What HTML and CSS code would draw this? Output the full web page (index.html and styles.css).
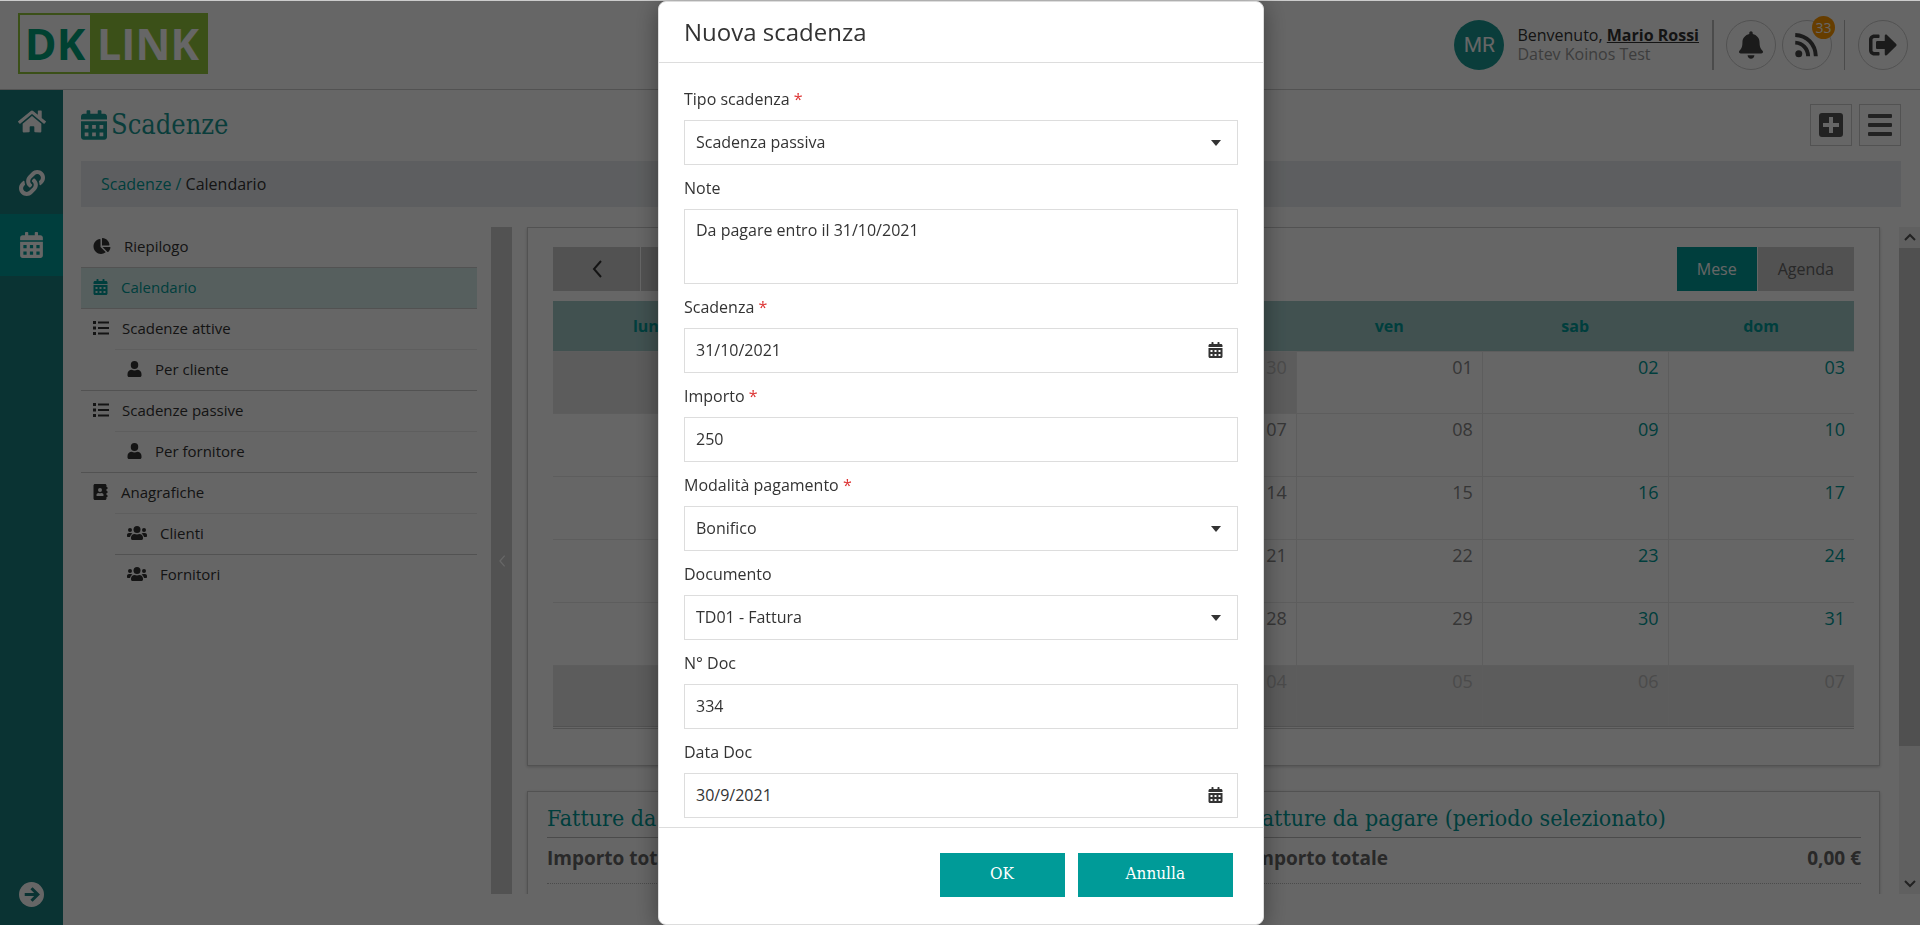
FILE: index.html
```html
<!DOCTYPE html>
<html lang="it">
<head>
  <meta charset="UTF-8">
  <meta name="viewport" content="width=device-width, initial-scale=1.0">
  <title>DK Link - Scadenze</title>
  <link rel="stylesheet" href="styles.css">
</head>
<body>
  <!-- Icone condivise -->
  <svg class="sprite" aria-hidden="true">
    <symbol id="i-calendar" viewBox="0 0 448 512"><path fill-rule="evenodd" d="M0 464c0 26.500 21.500 48 48 48h352c26.500 0 48-21.500 48-48V192H0v272zM64 256h64v64H64zm128 0h64v64h-64zm128 0h64v64h-64zM64 384h64v64H64zm128 0h64v64h-64zm128 0h64v64h-64zM400 64h-48V16c0-8.800-7.200-16-16-16h-32c-8.800 0-16 7.200-16 16v48H160V16c0-8.800-7.200-16-16-16h-32c-8.800 0-16 7.200-16 16v48H48C21.500 64 0 85.500 0 112v48h448v-48c0-26.500-21.500-48-48-48z"/></symbol>
    <symbol id="i-home" viewBox="0 0 576 512"><path d="M280.370 148.260L96 300.110V464a16 16 0 0 0 16 16l112.060-.29a16 16 0 0 0 15.920-16V368a16 16 0 0 1 16-16h64a16 16 0 0 1 16 16v95.640a16 16 0 0 0 16 16.050L464 480a16 16 0 0 0 16-16V300L295.670 148.260a12.190 12.190 0 0 0-15.300 0zM571.600 251.470L488 182.560V44.050a12 12 0 0 0-12-12h-56a12 12 0 0 0-12 12v72.610L318.470 43a48 48 0 0 0-61 0L4.340 251.470a12 12 0 0 0-1.600 16.900l25.500 31A12 12 0 0 0 45.150 301l235.220-193.740a12.190 12.190 0 0 1 15.300 0L530.900 301a12 12 0 0 0 16.900-1.600l25.500-31a12 12 0 0 0-1.700-16.930z"/></symbol>
    <symbol id="i-link" viewBox="0 0 512 512"><path d="M326.612 185.391c59.747 59.809 58.927 155.698.36 214.590-.11.120-.24.250-.36.370l-67.200 67.200c-59.270 59.270-155.699 59.262-214.960 0-59.270-59.260-59.270-155.700 0-214.960l37.106-37.106c9.840-9.840 26.786-3.300 27.294 10.606.648 17.722 3.826 35.527 9.690 52.721 1.986 5.822.567 12.262-3.783 16.612l-13.087 13.087c-28.026 28.026-28.905 73.660-1.155 101.960 28.024 28.579 74.086 28.749 102.325.510l67.200-67.190c28.191-28.191 28.073-73.757 0-101.830-3.701-3.694-7.429-6.564-10.341-8.569a16.037 16.037 0 0 1-6.947-12.606c-.396-10.567 3.348-21.456 11.698-29.806l21.054-21.055c5.521-5.521 14.182-6.199 20.584-1.731a152.482 152.482 0 0 1 20.522 17.197zM467.547 44.449c-59.261-59.262-155.690-59.270-214.960 0l-67.200 67.200c-.120.120-.250.250-.360.370-58.566 58.892-59.387 154.781.360 214.590a152.454 152.454 0 0 0 20.521 17.196c6.402 4.468 15.064 3.789 20.584-1.731l21.054-21.055c8.350-8.350 12.094-19.239 11.698-29.806a16.037 16.037 0 0 0-6.947-12.606c-2.912-2.005-6.640-4.875-10.341-8.569-28.073-28.073-28.191-73.639 0-101.830l67.200-67.190c28.239-28.239 74.300-28.069 102.325.510 27.750 28.300 26.872 73.934-1.155 101.960l-13.087 13.087c-4.350 4.350-5.769 10.790-3.783 16.612 5.864 17.194 9.042 34.999 9.690 52.721.509 13.906 17.454 20.446 27.294 10.606l37.106-37.106c59.271-59.259 59.271-155.699.001-214.959z"/></symbol>
    <symbol id="i-arrow" viewBox="0 0 24 24"><circle cx="12" cy="12" r="12"/><path class="cut" d="M5.500 12h12M12 6l6 6-6 6"/></symbol>
    <symbol id="i-pie" viewBox="0 0 544 512"><path d="M527.790 288H290.500l158.030 158.030c6.040 6.040 15.980 6.530 22.190.680 38.700-36.460 65.320-85.610 73.130-140.860 1.340-9.460-6.510-17.850-16.060-17.850zm-15.830-64.800C503.720 103.740 408.260 8.280 288.800.040 279.680-.59 272 7.100 272 16.240V240h223.770c9.140 0 16.820-7.680 16.190-16.800zM224 288V50.710c0-9.550-8.390-17.400-17.840-16.060C86.990 51.490-4.100 155.600.140 280.370 4.500 408.510 114.830 513.590 243.030 511.980c50.400-.63 96.970-16.870 135.260-44.030 7.900-5.600 8.420-17.230 1.570-24.080L224 288z"/></symbol>
    <symbol id="i-list" viewBox="0 0 512 512"><path d="M0 32h96v96H0zM0 208h96v96H0zM0 384h96v96H0zM160 48h352v64H160zM160 224h352v64H160zM160 400h352v64H160z"/></symbol>
    <symbol id="i-user" viewBox="0 0 448 512"><path d="M224 0a120 128 0 1 0 0 256a120 128 0 1 0 0-256zM134 282C60 282 0 335 0 416v48c0 26 21 48 48 48h352c27 0 48-22 48-48v-48c0-81-60-134-134-134c-56 26-124 26-180 0z"/></symbol>
    <symbol id="i-book" viewBox="0 0 448 512"><path fill-rule="evenodd" d="M48 0h320c26 0 48 22 48 48v48h20a12 12 0 0 1 12 12v40a12 12 0 0 1-12 12h-20v64h20a12 12 0 0 1 12 12v40a12 12 0 0 1-12 12h-20v64h20a12 12 0 0 1 12 12v40a12 12 0 0 1-12 12h-20v48c0 26-22 48-48 48H48c-26 0-48-22-48-48V48C0 22 22 0 48 0zm160 128a64 64 0 1 0 0 128a64 64 0 1 0 0-128zM96 365c0 10 10 19 22 19h180c12 0 22-9 22-19v-19c0-32-30-58-67-58c-29 13-61 13-90 0c-37 0-67 26-67 58z"/></symbol>
    <symbol id="i-users" viewBox="0 0 640 512"><circle cx="96" cy="160" r="64"/><circle cx="544" cy="160" r="64"/><circle cx="320" cy="144" r="112"/><path d="M64 256c-35 0-64 29-64 64v32c0 18 14 32 32 32h66c7-45 35-84 75-106-12-14-28-22-45-22zM576 256h-64c-17 0-33 8-45 22 40 22 68 61 75 106h66c18 0 32-14 32-32v-32c0-35-29-64-64-64zM243 288c-64 0-115 52-115 115v29c0 27 21 48 48 48h288c27 0 48-21 48-48v-29c0-63-51-115-115-115-52 21-102 21-154 0z"/></symbol>
    <symbol id="i-bell" viewBox="0 0 448 512"><path d="M224 512c35.320 0 63.970-28.650 63.970-64H160.030c0 35.350 28.650 64 63.970 64zm215.390-149.710c-19.320-20.760-55.470-51.990-55.470-154.290 0-77.700-54.480-139.900-127.940-155.160V32c0-17.670-14.320-32-31.980-32s-31.980 14.330-31.980 32v20.840C118.560 68.100 64.080 130.300 64.080 208c0 102.300-36.150 133.530-55.470 154.290-6 6.450-8.660 14.160-8.610 21.710.110 16.400 12.980 32 32.100 32h383.800c19.120 0 32-15.600 32.100-32 .050-7.550-2.610-15.270-8.610-21.710z"/></symbol>
    <symbol id="i-rss" viewBox="0 0 448 512"><circle cx="64" cy="416" r="64"/><path class="wave" d="M0 212c130 6 230 106 236 250M0 72c210 8 370 168 376 390"/></symbol>
    <symbol id="i-exit" viewBox="0 0 512 512"><path d="M497 273L329 441c-15 15-41 4.500-41-17v-96H152c-13.300 0-24-10.700-24-24v-96c0-13.300 10.700-24 24-24h136V88c0-21.400 25.900-32 41-17l168 168c9.300 9.400 9.300 24.600 0 34zM192 436v-40c0-6.600-5.400-12-12-12H96c-17.700 0-32-14.300-32-32V160c0-17.700 14.300-32 32-32h84c6.600 0 12-5.400 12-12V76c0-6.600-5.400-12-12-12H96c-53 0-96 43-96 96v192c0 53 43 96 96 96h84c6.600 0 12-5.400 12-12z"/></symbol>
    <symbol id="i-plus" viewBox="0 0 24 24"><path fill-rule="evenodd" d="M3 0h18a3 3 0 0 1 3 3v18a3 3 0 0 1-3 3H3a3 3 0 0 1-3-3V3a3 3 0 0 1 3-3zM10 4v6H4v4h6v6h4v-6h6v-4h-6V4z"/></symbol>
    <symbol id="i-bars" viewBox="0 0 24 24"><path d="M1 1h22a1 1 0 0 1 1 1v2a1 1 0 0 1-1 1H1a1 1 0 0 1-1-1V2a1 1 0 0 1 1-1zM1 10h22a1 1 0 0 1 1 1v2a1 1 0 0 1-1 1H1a1 1 0 0 1-1-1v-2a1 1 0 0 1 1-1zM1 19h22a1 1 0 0 1 1 1v2a1 1 0 0 1-1 1H1a1 1 0 0 1-1-1v-2a1 1 0 0 1 1-1z"/></symbol>
    <symbol id="i-left" viewBox="0 0 10 18"><path class="stroke" d="M9 1L2 9l7 8"/></symbol>
    <symbol id="i-up" viewBox="0 0 12 8"><path class="stroke" d="M1 7l5-5 5 5"/></symbol>
    <symbol id="i-down" viewBox="0 0 12 8"><path class="stroke" d="M1 1l5 5 5-5"/></symbol>
  </svg>

  <div class="app">
    <header class="topbar">
      <a class="logo" href="#" aria-label="DK Link">
        <span class="logo-dk">DK</span>
        <span class="logo-link">LINK</span>
      </a>
      <div class="user">
        <span class="avatar">MR</span>
        <p class="welcome">Benvenuto, <a href="#">Mario Rossi</a><br><small>Datev Koinos Test</small></p>
        <div class="alerts">
          <button class="round" aria-label="Notifiche"><svg width="24" height="28"><use href="#i-bell"/></svg></button>
          <button class="round" aria-label="Feed"><svg width="25" height="28"><use href="#i-rss"/></svg><span class="badge">33</span></button>
        </div>
        <button class="round" aria-label="Esci"><svg width="28" height="28"><use href="#i-exit"/></svg></button>
      </div>
    </header>

    <div class="wrap">
      <nav class="rail">
        <a href="#" aria-label="Home"><svg width="28" height="25"><use href="#i-home"/></svg></a>
        <a href="#" aria-label="Collegamenti"><svg width="26" height="26"><use href="#i-link"/></svg></a>
        <a href="#" class="active" aria-label="Scadenze"><svg width="23" height="26"><use href="#i-calendar"/></svg></a>
        <button class="expand" aria-label="Espandi"><svg width="25" height="25"><use href="#i-arrow"/></svg></button>
      </nav>

      <main class="content">
        <div class="page-head">
          <h1><svg width="26" height="30"><use href="#i-calendar"/></svg>Scadenze</h1>
          <div class="tools">
            <button aria-label="Aggiungi"><svg width="24" height="24"><use href="#i-plus"/></svg></button>
            <button aria-label="Menu"><svg width="24" height="24"><use href="#i-bars"/></svg></button>
          </div>
        </div>
        <div class="breadcrumb"><a href="#">Scadenze /</a> Calendario</div>

        <div class="columns">
          <ul class="menu">
            <li><a href="#"><svg width="18" height="16"><use href="#i-pie"/></svg>Riepilogo</a></li>
            <li><a href="#" class="active"><svg width="15" height="16"><use href="#i-calendar"/></svg>Calendario</a></li>
            <li><a href="#"><svg width="16" height="16"><use href="#i-list"/></svg>Scadenze attive</a>
              <ul>
                <li><a href="#"><svg width="15" height="16"><use href="#i-user"/></svg>Per cliente</a></li>
              </ul>
            </li>
            <li><a href="#"><svg width="16" height="16"><use href="#i-list"/></svg>Scadenze passive</a>
              <ul>
                <li><a href="#"><svg width="15" height="16"><use href="#i-user"/></svg>Per fornitore</a></li>
              </ul>
            </li>
            <li><a href="#"><svg width="15" height="16"><use href="#i-book"/></svg>Anagrafiche</a>
              <ul>
                <li><a href="#"><svg width="20" height="16"><use href="#i-users"/></svg>Clienti</a></li>
                <li><a href="#"><svg width="20" height="16"><use href="#i-users"/></svg>Fornitori</a></li>
              </ul>
            </li>
          </ul>

          <button class="splitter" aria-label="Chiudi menu"><svg width="8" height="12"><use href="#i-left"/></svg></button>

          <div class="panels">
            <section class="panel calendar">
              <div class="cal-bar">
                <div class="group">
                  <button class="nav" aria-label="Precedente"><svg width="10" height="18"><use href="#i-left"/></svg></button>
                  <button class="nav" aria-label="Successivo"></button>
                </div>
                <div class="group">
                  <button class="on">Mese</button>
                  <button>Agenda</button>
                </div>
              </div>
              <table>
                <thead>
                  <tr><th>lun</th><th></th><th></th><th></th><th>ven</th><th>sab</th><th>dom</th></tr>
                </thead>
                <tbody>
                  <tr><td class="off"></td><td class="off"></td><td class="off"></td><td class="off">30</td><td>01</td><td>02</td><td>03</td></tr>
                  <tr><td></td><td></td><td></td><td>07</td><td>08</td><td>09</td><td>10</td></tr>
                  <tr><td></td><td></td><td></td><td>14</td><td>15</td><td>16</td><td>17</td></tr>
                  <tr><td></td><td></td><td></td><td>21</td><td>22</td><td>23</td><td>24</td></tr>
                  <tr><td></td><td></td><td></td><td>28</td><td>29</td><td>30</td><td>31</td></tr>
                  <tr><td class="off"></td><td class="off"></td><td class="off"></td><td class="off">04</td><td class="off">05</td><td class="off">06</td><td class="off">07</td></tr>
                </tbody>
              </table>
            </section>

            <section class="panel totals">
              <div>
                <h2>Fatture da</h2>
                <p><span>Importo totale</span></p>
              </div>
              <div>
                <h2>Fatture da pagare (periodo selezionato)</h2>
                <p><span>Importo totale</span><span>0,00 €</span></p>
              </div>
            </section>
          </div>

          <div class="scroll" aria-hidden="true">
            <svg width="12" height="8"><use href="#i-up"/></svg>
            <div class="thumb"></div>
            <svg width="12" height="8"><use href="#i-down"/></svg>
          </div>
        </div>
      </main>
    </div>
  </div>

  <div class="overlay">
    <form class="modal" role="dialog" aria-labelledby="modalTitle">
      <h2 class="modal-title" id="modalTitle">Nuova scadenza</h2>
      <div class="modal-body">
        <label for="tipo">Tipo scadenza <em>*</em></label>
        <div class="field">
          <select id="tipo"><option>Scadenza passiva</option></select>
          <span class="caret"></span>
        </div>

        <label for="note">Note</label>
        <textarea id="note">Da pagare entro il 31/10/2021</textarea>

        <label for="scadenza">Scadenza <em>*</em></label>
        <div class="field">
          <input id="scadenza" type="text" value="31/10/2021">
          <svg width="15" height="16"><use href="#i-calendar"/></svg>
        </div>

        <label for="importo">Importo <em>*</em></label>
        <input id="importo" type="text" value="250">

        <label for="modalita">Modalità pagamento <em>*</em></label>
        <div class="field">
          <select id="modalita"><option>Bonifico</option></select>
          <span class="caret"></span>
        </div>

        <label for="documento">Documento</label>
        <div class="field">
          <select id="documento"><option>TD01 - Fattura</option></select>
          <span class="caret"></span>
        </div>

        <label for="numero">N° Doc</label>
        <input id="numero" type="text" value="334">

        <label for="data">Data Doc</label>
        <div class="field">
          <input id="data" type="text" value="30/9/2021">
          <svg width="15" height="16"><use href="#i-calendar"/></svg>
        </div>
      </div>
      <div class="modal-foot">
        <button type="submit">OK</button>
        <button type="button">Annulla</button>
      </div>
    </form>
  </div>
</body>
</html>
```
FILE: styles.css
```css
* { box-sizing: border-box; }
body { margin: 0; font-family: "Open Sans", "Noto Sans", sans-serif; font-size: 16px; line-height: 24px; color: #333; background: #fff; }
h1, h2, p, ul { margin: 0; padding: 0; }
ul { list-style: none; }
a { color: inherit; text-decoration: none; }
button { font-family: inherit; font-size: 16px; color: inherit; border: 0; padding: 0; cursor: pointer; }
svg { fill: currentColor; flex: none; }
.sprite { position: absolute; width: 0; height: 0; }
.stroke { fill: none; stroke: currentColor; stroke-width: 2; }
.wave { fill: none; stroke: currentColor; stroke-width: 72; }
.cut { fill: none; stroke: #197f7f; stroke-width: 3; }

.app { height: 100vh; display: flex; flex-direction: column; overflow: hidden; }

/* Barra superiore */
.topbar { height: 90px; flex: none; display: flex; justify-content: space-between; align-items: flex-start; padding: 13px 12px 0 18px; border-bottom: 1px solid #ccc; }
.logo { display: flex; width: 190px; height: 61px; border: 2px solid #93c83d; font-size: 43px; font-weight: bold; line-height: 58px; }
.logo-dk { width: 70px; text-align: center; color: #00a27a; }
.logo-link { flex: 1; text-align: center; color: #fff; background: #93c83d; }
.user { display: flex; align-items: center; padding-top: 7px; }
.avatar { width: 50px; height: 50px; border-radius: 50%; background: #199a94; color: #fff; font: 21px/50px Roboto, sans-serif; text-align: center; }
.welcome { margin: 0 13px; line-height: 19px; }
.welcome a { font-weight: bold; text-decoration: underline; }
.welcome small { font-size: 16px; color: #999; }
.alerts { display: flex; gap: 6px; height: 50px; padding: 0 12px; margin-right: 13px; border-left: 2px solid #bbb; border-right: 1px solid #bbb; }
.round { position: relative; width: 50px; height: 50px; border: 1px solid #ccc; border-radius: 50%; background: #fff; display: flex; align-items: center; justify-content: center; color: #444; }
.badge { position: absolute; top: -5px; right: -4px; width: 23px; height: 23px; border-radius: 50%; background: #ff9900; color: #fff; font-size: 14px; line-height: 23px; }

.wrap { flex: 1; display: flex; min-height: 0; }

/* Barra laterale */
.rail { width: 63px; flex: none; display: flex; flex-direction: column; background: #197f7f; color: #fff; }
.rail a { height: 62px; display: flex; align-items: center; justify-content: center; }
.rail a.active { background: #009b98; }
.expand { margin-top: auto; height: 62px; background: none; color: #fff; display: flex; align-items: center; justify-content: center; }

.content { flex: 1; min-width: 0; display: flex; flex-direction: column; padding: 14px 0 31px 18px; }
.page-head { display: flex; justify-content: space-between; align-items: center; height: 42px; margin: 0 19px 15px 0; }
h1 { display: flex; align-items: center; gap: 4px; font: 27px/42px "Roboto Slab", "DejaVu Serif Condensed", serif; color: #199a94; }
.tools { display: flex; gap: 7px; }
.tools button { width: 42px; height: 42px; border: 1px solid #ccc; background: #fff; color: #555; display: flex; align-items: center; justify-content: center; }
.breadcrumb { margin: 0 19px 20px 0; padding: 11px 20px; background: #e9ecef; }
.breadcrumb a { color: #009b98; }

.columns { flex: 1; display: flex; min-height: 0; }

/* Menu */
.menu { width: 396px; flex: none; margin-right: 14px; font-size: 15px; }
.menu > li { border-top: 1px solid #ccc; }
.menu > li:first-child { border-top: 0; }
.menu a { display: flex; align-items: center; gap: 13px; height: 40px; padding: 0 0 3px 12px; }
.menu a.active { background: #d8eeec; color: #009b98; }
.menu ul { margin-left: 34px; }
.menu ul li { border-top: 1px solid #ececec; }
.menu ul li + li { border-top-color: #ccc; }
.splitter { width: 21px; flex: none; background: #ccc; color: #fff; }

/* Pannelli */
.panels { flex: 1; min-width: 0; overflow: hidden; padding: 0 19px 0 15px; }
.panel { border: 1px solid #ccc; box-shadow: 0 1px 3px rgba(0, 0, 0, 0.2); }
.calendar { padding: 19px 25px 36px; margin-bottom: 25px; }
.cal-bar { display: flex; justify-content: space-between; margin-bottom: 10px; }
.group { display: flex; gap: 1px; }
.group button { height: 44px; padding: 0 20px; background: #ccc; color: #666; display: flex; align-items: center; justify-content: center; }
.group .nav { width: 87px; color: #333; }
.group .on { background: #009b98; color: #fff; }
.calendar table { width: 100%; table-layout: fixed; border-collapse: collapse; border-bottom: 3px double #ccc; }
.calendar th { height: 50px; padding: 0; background: #a2cbc9; color: #009b98; }
.calendar td { height: 63px; padding: 3px 9px; border: 1px solid #e9e9e9; border-width: 1px 0 0 1px; text-align: right; vertical-align: top; font-size: 18px; color: #888; }
.calendar tr:first-child td, .calendar tr:last-child td { height: 62px; }
.calendar td:first-child { border-left: 0; }
.calendar td:nth-child(n+6) { color: #009b98; }
.calendar td.off { background: #e6e6e6; color: #bbb; }
.totals { display: grid; grid-template-columns: 1fr 1fr; gap: 90px; padding: 8px 18px 40px 19px; }
.totals h2 { font: 23px/37px "Roboto Slab", "DejaVu Serif Condensed", serif; color: #009b98; white-space: nowrap; border-bottom: 1px solid #bbb; }
.totals p { display: flex; justify-content: space-between; padding: 8px 0 13px; font-size: 19px; font-weight: bold; line-height: 24px; color: #666; border-bottom: 1px dotted #bbb; }

.scroll { width: 21px; flex: none; display: flex; flex-direction: column; align-items: center; justify-content: space-between; padding: 6px 0; background: #f0f0f0; color: #555; }
.thumb { width: 21px; height: 76%; margin: 7px 0 auto; background: #c8c8c8; }

/* Finestra modale */
.overlay { position: fixed; inset: 0; display: flex; justify-content: center; padding-left: 2px; border-top: 1px solid #ccc; background: rgba(0, 0, 0, 0.6); }
.modal { width: 606px; max-width: 100%; display: flex; flex-direction: column; background: #fff; border: 1px solid #ddd; border-radius: 8px; box-shadow: 0 4px 24px rgba(0, 0, 0, 0.4); }
.modal-title { padding: 14px 25px; font-size: 24px; font-weight: normal; line-height: 32px; border-bottom: 1px solid #ddd; }
.modal-body { flex: 1; min-height: 0; overflow: hidden; padding: 13px 25px 9px; }
.modal-body label { display: block; margin: 11px 0 9px; }
.modal-body em { color: #d33; font-style: normal; }
.modal-body input, .modal-body select, .modal-body textarea { display: block; width: 100%; height: 45px; padding: 0 11px 2px; font: inherit; color: inherit; background: #fff; border: 1px solid #ddd; border-radius: 0; appearance: none; }
.modal-body textarea { height: 75px; padding-top: 8px; resize: none; }
.field { position: relative; }
.field svg { position: absolute; right: 15px; top: 14px; pointer-events: none; }
.caret { position: absolute; right: 17px; top: 20px; border: 5px solid transparent; border-top: 6px solid #333; border-bottom: 0; pointer-events: none; }
.modal-foot { display: flex; justify-content: flex-end; gap: 13px; padding: 25px 30px 27px; border-top: 1px solid #ddd; }
.modal-foot button { height: 44px; min-width: 125px; padding: 0 48px 4px; background: #009b98; color: #fff; font: 17px "Roboto Slab", "DejaVu Serif Condensed", serif; }
```
